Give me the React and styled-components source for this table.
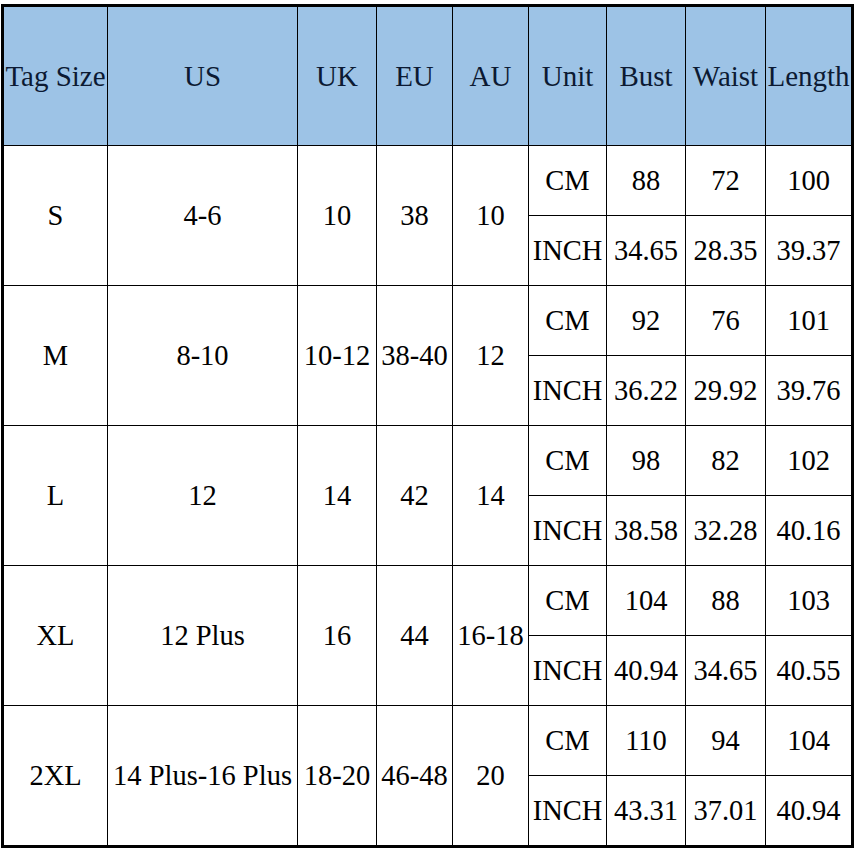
import React from 'react';
import styled, { createGlobalStyle } from 'styled-components';

const GlobalStyle = createGlobalStyle`
  html, body {
    margin: 0;
    padding: 0;
    background: #ffffff;
  }
`;

const Page = styled.div`
  padding: 4px 0 0 1px;
`;

const Chart = styled.div`
  display: grid;
  grid-template-columns: 103px 189px 78px 75px 75px 77px 78px 79px 85px;
  grid-template-rows: 138px repeat(10, 69px);
  gap: 1px;
  width: max-content;
  background: #000000;
  border: 3px solid #000000;
  font-family: 'Liberation Serif', 'Times New Roman', serif;
  font-size: 28.5px;
`;

const HeadCell = styled.div`
  display: flex;
  align-items: center;
  justify-content: center;
  background: #9dc3e6;
  color: #0c1a33;
  font-size: 29px;
  white-space: nowrap;
  overflow: hidden;
`;

const Cell = styled.div`
  display: flex;
  align-items: center;
  justify-content: center;
  background: #ffffff;
  color: #000000;
  white-space: nowrap;
  overflow: hidden;
  grid-row: ${(p) => (p.$span ? `span ${p.$span}` : 'auto')};
`;

const headers = ['Tag Size', 'US', 'UK', 'EU', 'AU', 'Unit', 'Bust', 'Waist', 'Length'];

const sizes = [
  { tag: 'S', us: '4-6', uk: '10', eu: '38', au: '10', cm: ['88', '72', '100'], inch: ['34.65', '28.35', '39.37'] },
  { tag: 'M', us: '8-10', uk: '10-12', eu: '38-40', au: '12', cm: ['92', '76', '101'], inch: ['36.22', '29.92', '39.76'] },
  { tag: 'L', us: '12', uk: '14', eu: '42', au: '14', cm: ['98', '82', '102'], inch: ['38.58', '32.28', '40.16'] },
  { tag: 'XL', us: '12 Plus', uk: '16', eu: '44', au: '16-18', cm: ['104', '88', '103'], inch: ['40.94', '34.65', '40.55'] },
  { tag: '2XL', us: '14 Plus-16 Plus', uk: '18-20', eu: '46-48', au: '20', cm: ['110', '94', '104'], inch: ['43.31', '37.01', '40.94'] },
];

function SizeChart() {
  return (
    <Chart>
      {headers.map((h) => (
        <HeadCell key={h}>{h}</HeadCell>
      ))}
      {sizes.map((s) => (
        <React.Fragment key={s.tag}>
          <Cell $span={2}>{s.tag}</Cell>
          <Cell $span={2}>{s.us}</Cell>
          <Cell $span={2}>{s.uk}</Cell>
          <Cell $span={2}>{s.eu}</Cell>
          <Cell $span={2}>{s.au}</Cell>
          <Cell>CM</Cell>
          {s.cm.map((v, i) => (
            <Cell key={'c' + i}>{v}</Cell>
          ))}
          <Cell>INCH</Cell>
          {s.inch.map((v, i) => (
            <Cell key={'i' + i}>{v}</Cell>
          ))}
        </React.Fragment>
      ))}
    </Chart>
  );
}

export default function App() {
  return (
    <>
      <GlobalStyle />
      <Page>
        <SizeChart />
      </Page>
    </>
  );
}
